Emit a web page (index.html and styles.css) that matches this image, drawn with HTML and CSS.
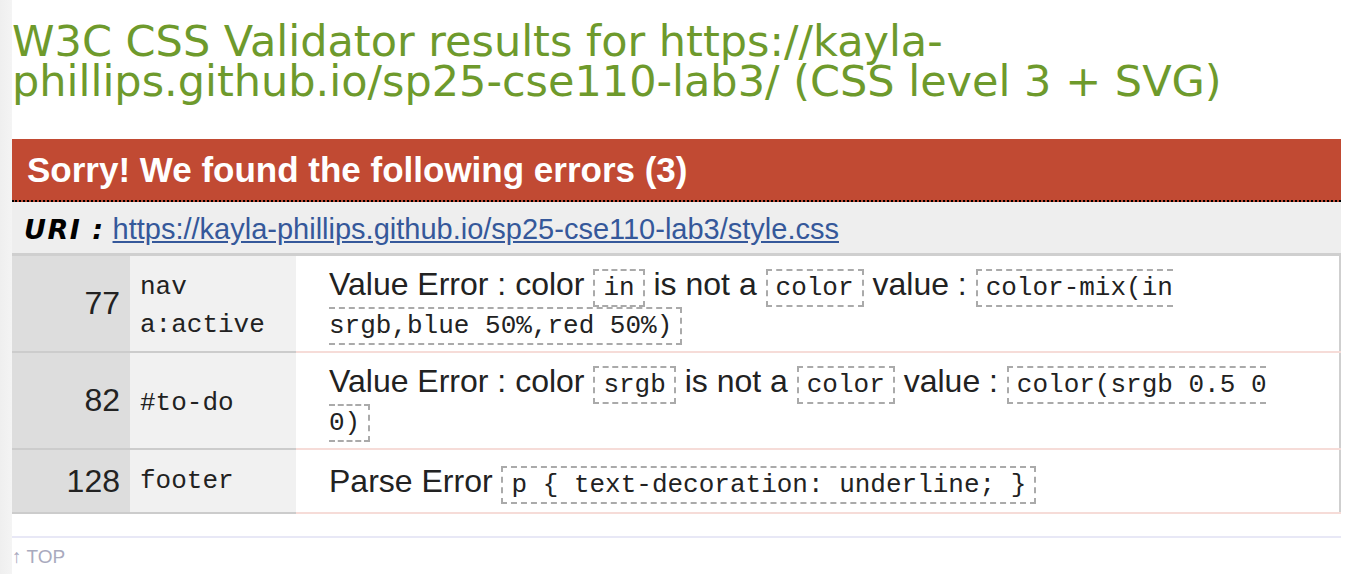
FILE: index.html
```html
<!DOCTYPE html>
<html lang="en">
<head>
<meta charset="utf-8">
<title>W3C CSS Validator results</title>
<link rel="stylesheet" href="styles.css">
</head>
<body>
<div class="page">
  <div class="title-wrap">
    <h2 class="title">W3C CSS Validator results for https://kayla-<br>phillips.github.io/sp25-cse110-lab3/ (CSS level 3 + SVG)</h2>
  </div>
  <div class="errors">
    <h3 class="errors-head">Sorry! We found the following errors (3)</h3>
    <div class="uri"><span class="uri-label">URI :</span> <a class="uri-link" href="#">https://kayla-phillips.github.io/sp25-cse110-lab3/style.css</a></div>
    <table class="results">
      <tr>
        <td class="linenum">77</td>
        <td class="context">nav a:active</td>
        <td class="message">Value Error : color <code class="box">in</code> is not a <code class="box">color</code> value : <code class="box">color-mix(in srgb,blue 50%,red 50%)</code></td>
      </tr>
      <tr>
        <td class="linenum">82</td>
        <td class="context">#to-do</td>
        <td class="message">Value Error : color <code class="box">srgb</code> is not a <code class="box">color</code> value : <code class="box">color(srgb 0.5 0 0)</code></td>
      </tr>
      <tr class="single">
        <td class="linenum">128</td>
        <td class="context">footer</td>
        <td class="message">Parse Error <code class="box">p { text-decoration: underline; }</code></td>
      </tr>
    </table>
  </div>
  <div class="rule"></div>
  <a class="top" href="#">↑ TOP</a>
</div>
</body>
</html>
```

FILE: styles.css
```css
html, body {
  margin: 0;
  padding: 0;
}
body {
  background: linear-gradient(to right, #efefef 0, #f4f4f4 12px, #ffffff 12px);
  font-family: "Liberation Sans", Arial, sans-serif;
  color: #222;
}
.page {
  padding: 0 27px 0 12px;
}
.title-wrap {
  height: 139px;
  overflow: hidden;
}
.title {
  margin: 0;
  padding-top: 21px;
  white-space: nowrap;
  font-family: "DejaVu Sans", Verdana, sans-serif;
  font-weight: normal;
  font-size: 43px;
  line-height: 40px;
  color: #6e9a2c;
}
.errors-head {
  margin: 0;
  background: #c14a33;
  color: #ffffff;
  font-size: 35px;
  font-weight: bold;
  line-height: 62px;
  height: 61px;
  padding: 0 15px;
  border-bottom: 2px dotted #000;
}
.uri {
  background: #eeeeee;
  height: 51px;
  line-height: 54px;
  padding: 0 12px;
  font-size: 29px;
}
.uri-label {
  font-family: "DejaVu Sans", Verdana, sans-serif;
  font-weight: bold;
  font-style: italic;
  font-size: 27px;
  letter-spacing: 1.5px;
  color: #000;
}
.uri-link {
  color: #35589a;
  text-decoration: underline;
}
.results {
  width: 100%;
  border-collapse: collapse;
  border-top: 3px solid #cfcfcf;
  border-right: 2px solid #cfcfcf;
}
.results td {
  vertical-align: middle;
  padding: 9px 10px 10px;
  line-height: 38px;
}
.results .single td {
  padding-top: 12px;
  padding-bottom: 12px;
}
.linenum {
  width: 98px;
  background: #dddddd;
  text-align: right;
  font-size: 32px;
  color: #222;
  border-bottom: 2px solid #cccccc;
}
.results .context {
  width: 146px;
  background: #f1f1f1;
  font-family: "Liberation Mono", "Courier New", monospace;
  font-size: 26px;
  color: #222;
  padding-top: 12px;
  padding-bottom: 7px;
  border-bottom: 2px solid #cccccc;
}
.results .message {
  background: #ffffff;
  font-size: 32px;
  color: #222;
  padding-left: 33px;
  padding-right: 60px;
  border-bottom: 2px solid #f6dcd8;
}
.box {
  font-family: "Liberation Mono", "Courier New", monospace;
  font-size: 26px;
  line-height: 1;
  border: 2px dashed #aaaaaa;
  padding: 2px 8px;
  color: #222;
}
.rule {
  margin-top: 22px;
  border-top: 2px solid #e8e8f6;
}
.top {
  display: inline-block;
  margin-top: 8px;
  font-size: 19px;
  color: #a9aabe;
  text-decoration: none;
}
```
